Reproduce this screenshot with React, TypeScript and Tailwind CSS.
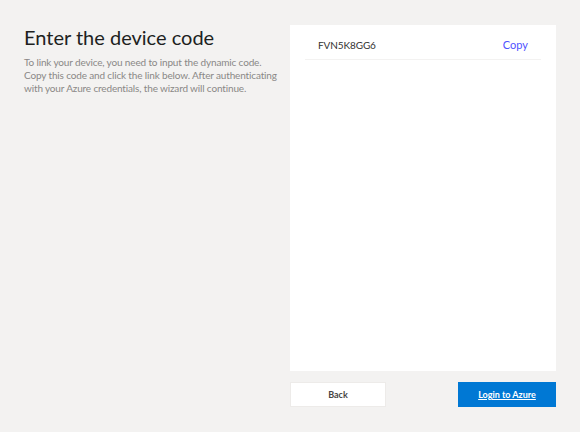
import React from 'react';

export default function App() {
  return (
    <div
      className="w-[580px] h-[432px] bg-[#f3f2f1] flex pt-[25px] pr-[24px] pb-[25px] text-[#323130]"
      style={{ fontFamily: 'Lato, "Noto Sans", sans-serif' }}
    >
      {/* Intro text */}
      <div className="w-[290px] pl-[24px] pr-[8px]">
        <h1 className="text-[20px] leading-[24px] text-[#201f1e] font-normal">
          Enter the device code
        </h1>
        <p className="mt-[7px] text-[10px] leading-[13px] text-[#8a8886] tracking-[-0.15px]">
          To link your device, you need to input the dynamic code. Copy this code and click the link below. After
          authenticating with your Azure credentials, the wizard will continue.
        </p>
      </div>

      {/* Panel + actions */}
      <div className="flex-1 flex flex-col">
        <div className="flex-1 bg-white px-[15px] pt-[9px]">
          <div className="flex items-center justify-between px-[13px] h-[23px] border-b border-[#f3f2f1] pb-[2px] box-content">
            <span className="text-[10px] tracking-[-0.1px] text-[#323130]">FVN5K8GG6</span>
            <button className="text-[11px] text-[#4f52ff]">Copy</button>
          </div>
        </div>
        <div className="flex justify-between mt-[11px] h-[25px]">
          <button className="w-[96px] bg-white text-[9px] font-bold text-[#484644] border border-[#edebe9]">
            Back
          </button>
          <button className="w-[98px] bg-[#0078d4] text-[9px] font-bold text-white underline">
            Login to Azure
          </button>
        </div>
      </div>
    </div>
  );
}
